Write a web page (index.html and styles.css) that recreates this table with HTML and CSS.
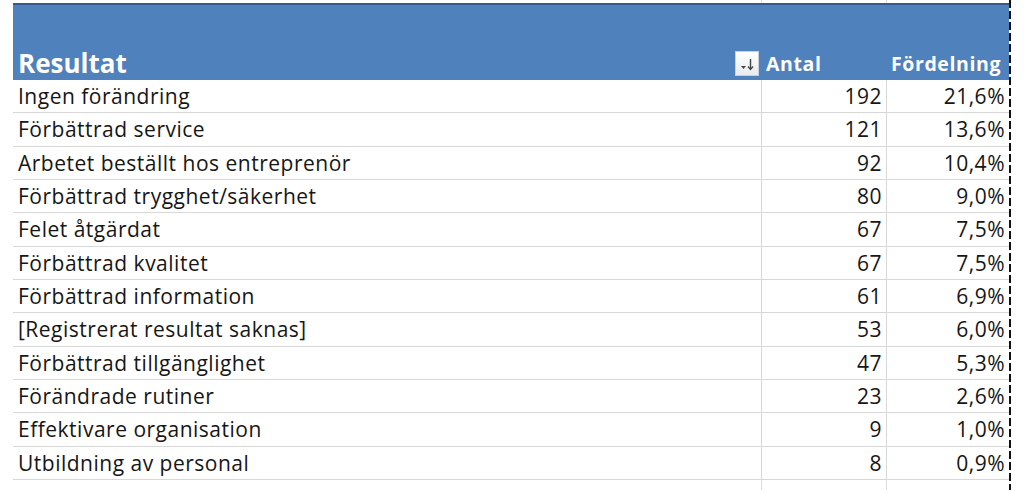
FILE: index.html
```html
<!DOCTYPE html>
<html lang="sv">
<head>
<meta charset="utf-8">
<link rel="stylesheet" href="styles.css">
</head>
<body>
<div class="page">
  <div class="sheet">
    <div class="strip">
      <div class="c1"></div><div class="c2"></div><div class="c3"></div>
    </div>
    <div class="head">
      <div class="hcell h1"><span class="title">Resultat</span>
        <span class="sortbtn"><svg width="15" height="13" viewBox="0 0 15 13"><path d="M1 8 L6 8 L3.5 11 Z" fill="#444"/><path d="M10.5 1 V11" stroke="#444" stroke-width="1.4"/><path d="M8 8.5 L10.5 11.5 L13 8.5" stroke="#444" stroke-width="1.3" fill="none"/></svg></span>
      </div>
      <div class="hcell h2">Antal</div>
      <div class="hcell h3">Fördelning</div>
    </div>
    <div class="rows">
      <div class="row"><div class="c1">Ingen förändring</div><div class="c2">192</div><div class="c3">21,6%</div></div>
      <div class="row"><div class="c1">Förbättrad service</div><div class="c2">121</div><div class="c3">13,6%</div></div>
      <div class="row"><div class="c1">Arbetet beställt hos entreprenör</div><div class="c2">92</div><div class="c3">10,4%</div></div>
      <div class="row"><div class="c1">Förbättrad trygghet/säkerhet</div><div class="c2">80</div><div class="c3">9,0%</div></div>
      <div class="row"><div class="c1">Felet åtgärdat</div><div class="c2">67</div><div class="c3">7,5%</div></div>
      <div class="row"><div class="c1">Förbättrad kvalitet</div><div class="c2">67</div><div class="c3">7,5%</div></div>
      <div class="row"><div class="c1">Förbättrad information</div><div class="c2">61</div><div class="c3">6,9%</div></div>
      <div class="row"><div class="c1">[Registrerat resultat saknas]</div><div class="c2">53</div><div class="c3">6,0%</div></div>
      <div class="row"><div class="c1">Förbättrad tillgänglighet</div><div class="c2">47</div><div class="c3">5,3%</div></div>
      <div class="row"><div class="c1">Förändrade rutiner</div><div class="c2">23</div><div class="c3">2,6%</div></div>
      <div class="row"><div class="c1">Effektivare organisation</div><div class="c2">9</div><div class="c3">1,0%</div></div>
      <div class="row"><div class="c1">Utbildning av personal</div><div class="c2">8</div><div class="c3">0,9%</div></div>
    </div>
    <div class="strip tail">
      <div class="c1"></div><div class="c2"></div><div class="c3"></div>
    </div>
  </div>
  <div class="pagebreak"></div>
</div>
</body>
</html>
```

FILE: styles.css
```css
html, body {
  margin: 0;
  padding: 0;
  background: #ffffff;
}
body {
  font-family: "Open Sans", "Liberation Sans", sans-serif;
  color: #161616;
  width: 1024px;
  height: 493px;
  overflow: hidden;
}
.page {
  display: flex;
  padding-left: 13px;
}
.sheet {
  width: 996px;
  display: flex;
  flex-direction: column;
}
.strip {
  display: grid;
  grid-template-columns: 749px 125px 122px;
  height: 3px;
}
.strip .c1, .strip .c2 {
  border-right: 1px solid #dcdcdc;
}
.strip.tail {
  height: 10px;
}
.head {
  display: grid;
  grid-template-columns: 749px 125px 122px;
  height: 75px;
  background: #4f81bd;
  border-top: 2px solid #35598a;
  color: #ffffff;
  font-weight: 700;
}
.hcell {
  display: flex;
  align-items: flex-end;
  padding-bottom: 4px;
  font-size: 19.5px;
  line-height: 24px;
  letter-spacing: 0.6px;
}
.h1 {
  justify-content: space-between;
  padding-left: 5px;
  padding-right: 3px;
  letter-spacing: 0;
}
.title {
  font-size: 26px;
  line-height: 30px;
  margin-bottom: -2px;
}
.sortbtn {
  width: 24px;
  height: 25px;
  box-sizing: border-box;
  border: 1px solid #c9cfd8;
  background: linear-gradient(#ffffff, #e8ebef);
  display: flex;
  align-items: flex-end;
  justify-content: center;
  padding-bottom: 4px;
}
.h2 {
  padding-left: 4px;
}
.h3 {
  padding-left: 4px;
}
.rows {
  display: flex;
  flex-direction: column;
}
.row {
  display: grid;
  grid-template-columns: 749px 125px 122px;
  height: 33.333px;
  box-sizing: border-box;
  border-bottom: 1px solid #d8d8d8;
  font-size: 21px;
  line-height: 32px;
  letter-spacing: 0.5px;
}
.row .c1 {
  padding-left: 5px;
  border-right: 1px solid #d8d8d8;
  white-space: nowrap;
}
.row .c2 {
  text-align: right;
  padding-right: 4px;
  border-right: 1px solid #d8d8d8;
}
.row .c3 {
  text-align: right;
  padding-right: 4px;
}
.pagebreak {
  width: 2px;
  height: 490px;
  background: repeating-linear-gradient(to bottom, #111 0 8px, transparent 8px 11px);
}
```
